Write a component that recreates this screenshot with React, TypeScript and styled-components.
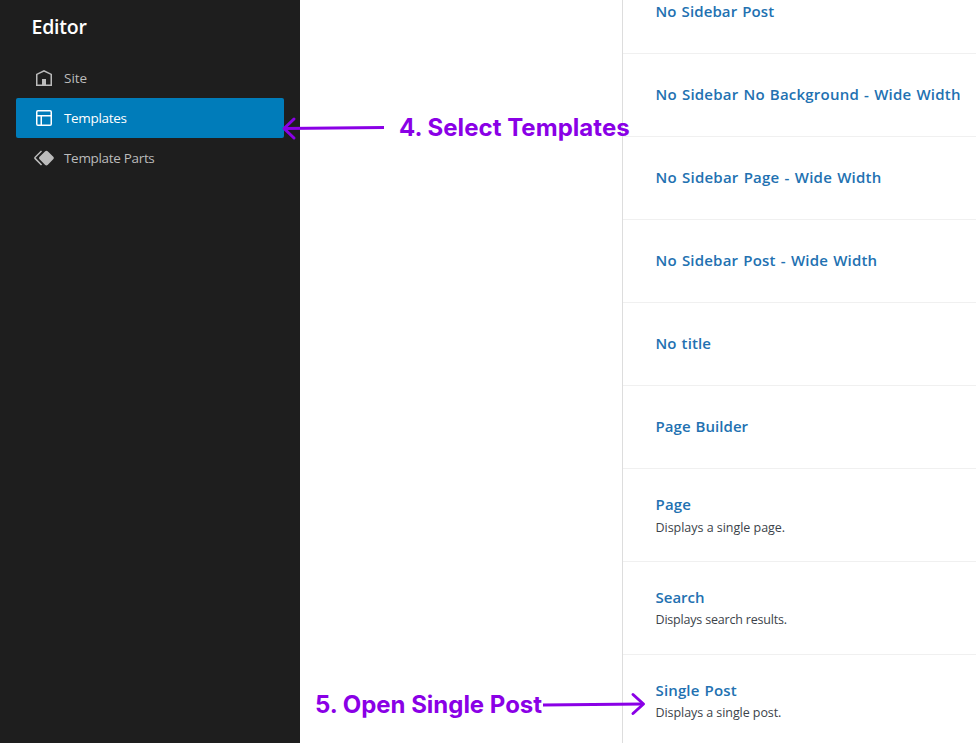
import React from "react";
import styled, { createGlobalStyle } from "styled-components";

const GlobalStyle = createGlobalStyle`
  * { box-sizing: border-box; }
  body { margin: 0; background: #fff; overflow: hidden; }
`;

const Screen = styled.div`
  position: relative;
  display: flex;
  width: 976px;
  height: 743px;
  overflow: hidden;
  background: #fff;
  font-family: "Open Sans", "Noto Sans", sans-serif;
`;

const Sidebar = styled.nav`
  flex: 0 0 300px;
  padding: 13px 16px;
  background: #1e1e1e;
`;

const SidebarTitle = styled.h1`
  margin: 0 0 17px;
  padding-left: 15.5px;
  color: #fff;
  font-size: 19.5px;
  font-weight: 600;
  line-height: 28px;
  letter-spacing: -0.2px;
`;

const NavItem = styled.a<{ $active?: boolean; $spacing: number }>`
  display: flex;
  align-items: center;
  gap: 8px;
  height: 40px;
  padding: 0 16px;
  border-radius: 2px;
  background: ${(p) => (p.$active ? "#007cba" : "transparent")};
  color: ${(p) => (p.$active ? "#fff" : "#bbb")};
  font-size: 13.5px;
  letter-spacing: ${(p) => p.$spacing}px;
  svg { fill: currentColor; flex: none; }
`;

const Gutter = styled.div`
  flex: 0 0 322px;
`;

const TemplateList = styled.main`
  flex: 1;
  height: 772px;
  margin-top: -29px;
  border-left: 1px solid #ddd;
`;

const Row = styled.article<{ $tall?: boolean }>`
  display: flex;
  flex-direction: column;
  justify-content: center;
  height: ${(p) => (p.$tall ? 93 : 83)}px;
  padding: 0 0 ${(p) => (p.$tall ? 1 : 3)}px 32.5px;
  border-bottom: 1px solid #f0f0f0;
  white-space: nowrap;
`;

const RowTitle = styled.a<{ $spacing: number }>`
  color: #2271b1;
  font-size: 15px;
  font-weight: 600;
  line-height: 22px;
  letter-spacing: ${(p) => p.$spacing}px;
  word-spacing: 1px;
`;

const RowText = styled.p<{ $spacing: number; $drop?: boolean }>`
  margin: ${(p) => (p.$drop ? "4px 0 -1px" : "3px 0 0")};
  color: #3c434a;
  font-size: 12.5px;
  line-height: 18px;
  letter-spacing: ${(p) => p.$spacing}px;
`;

const Callout = styled.div<{ $x: number; $y: number; $spacing: number }>`
  position: absolute;
  left: ${(p) => p.$x}px;
  top: ${(p) => p.$y}px;
  color: #8a00e6;
  font-family: Inter, sans-serif;
  font-size: 24px;
  font-weight: 700;
  line-height: 30px;
  letter-spacing: ${(p) => p.$spacing}px;
  white-space: nowrap;
`;

const Arrow = styled.svg<{ $x: number; $y: number }>`
  position: absolute;
  left: ${(p) => p.$x}px;
  top: ${(p) => p.$y}px;
  fill: none;
  stroke: #8a00e6;
  stroke-width: 3;
`;

const navItems = [
  {
    label: "Site",
    spacing: 0,
    path: "M12 4L4 7.9V20h16V7.9L12 4zm6.5 14.5H14V13h-4v5.5H5.5V8.8L12 5.7l6.5 3.1v9.7z",
  },
  {
    label: "Templates",
    spacing: -0.33,
    active: true,
    path: "M18 5.5H6a.5.5 0 00-.5.5v3h13V6a.5.5 0 00-.5-.5zm.5 5H10v8h8a.5.5 0 00.5-.5v-7.5zm-10 0h-3V18a.5.5 0 00.5.5h2.5v-8zM6 4h12a2 2 0 012 2v12a2 2 0 01-2 2H6a2 2 0 01-2-2V6a2 2 0 012-2z",
  },
  {
    label: "Template Parts",
    spacing: -0.32,
    path: "M21.3 10.8l-5.6-5.6c-.7-.7-1.8-.7-2.5 0l-5.6 5.6c-.7.7-.7 1.8 0 2.5l5.6 5.6c.3.3.8.5 1.2.5s.9-.2 1.2-.5l5.6-5.6c.8-.7.8-1.9.1-2.5zm-17.6 1L10 5.5l-1-1-6.3 6.3c-.7.7-.7 1.8 0 2.5L9 19.5l1.1-1.1-6.3-6.3c-.2 0-.2-.2-.1-.3z",
  },
];

const templates: { title: string; spacing: number; text?: string; textSpacing?: number; drop?: boolean }[] = [
  { title: "No Sidebar Post", spacing: 0.1 },
  { title: "No Sidebar No Background - Wide Width", spacing: 0.21 },
  { title: "No Sidebar Page - Wide Width", spacing: 0.23 },
  { title: "No Sidebar Post - Wide Width", spacing: 0.2 },
  { title: "No title", spacing: 0.1 },
  { title: "Page Builder", spacing: 0.05 },
  { title: "Page", spacing: 0.2, text: "Displays a single page.", textSpacing: -0.03, drop: true },
  { title: "Search", spacing: 0, text: "Displays search results.", textSpacing: -0.19 },
  { title: "Single Post", spacing: 0.15, text: "Displays a single post.", textSpacing: -0.07 },
];

export default function App() {
  return (
    <Screen>
      <GlobalStyle />
      <Sidebar>
        <SidebarTitle>Editor</SidebarTitle>
        {navItems.map((item) => (
          <NavItem key={item.label} $active={item.active} $spacing={item.spacing}>
            <svg width="24" height="24" viewBox="0 0 24 24">
              <path d={item.path} />
            </svg>
            <span>{item.label}</span>
          </NavItem>
        ))}
      </Sidebar>
      <Gutter />
      <TemplateList>
        {templates.map((t) => (
          <Row key={t.title} $tall={!!t.text}>
            <RowTitle $spacing={t.spacing}>{t.title}</RowTitle>
            {t.text && (
              <RowText $spacing={t.textSpacing ?? 0} $drop={t.drop}>
                {t.text}
              </RowText>
            )}
          </Row>
        ))}
      </TemplateList>
      <Callout $x={399} $y={113} $spacing={0.04}>4. Select Templates</Callout>
      <Arrow $x={280} $y={114} width="106" height="28">
        <path d="M104 13.5L4 14.5" />
        <path d="M14 5L4 14.5L14 24" strokeLinecap="round" strokeLinejoin="round" />
      </Arrow>
      <Callout $x={315} $y={690} $spacing={-0.02}>5. Open Single Post</Callout>
      <Arrow $x={541} $y={690} width="106" height="28">
        <path d="M2 15L102 14" />
        <path d="M92 4.5L102.500 14L92 23.500" strokeLinecap="round" strokeLinejoin="round" />
      </Arrow>
    </Screen>
  );
}
